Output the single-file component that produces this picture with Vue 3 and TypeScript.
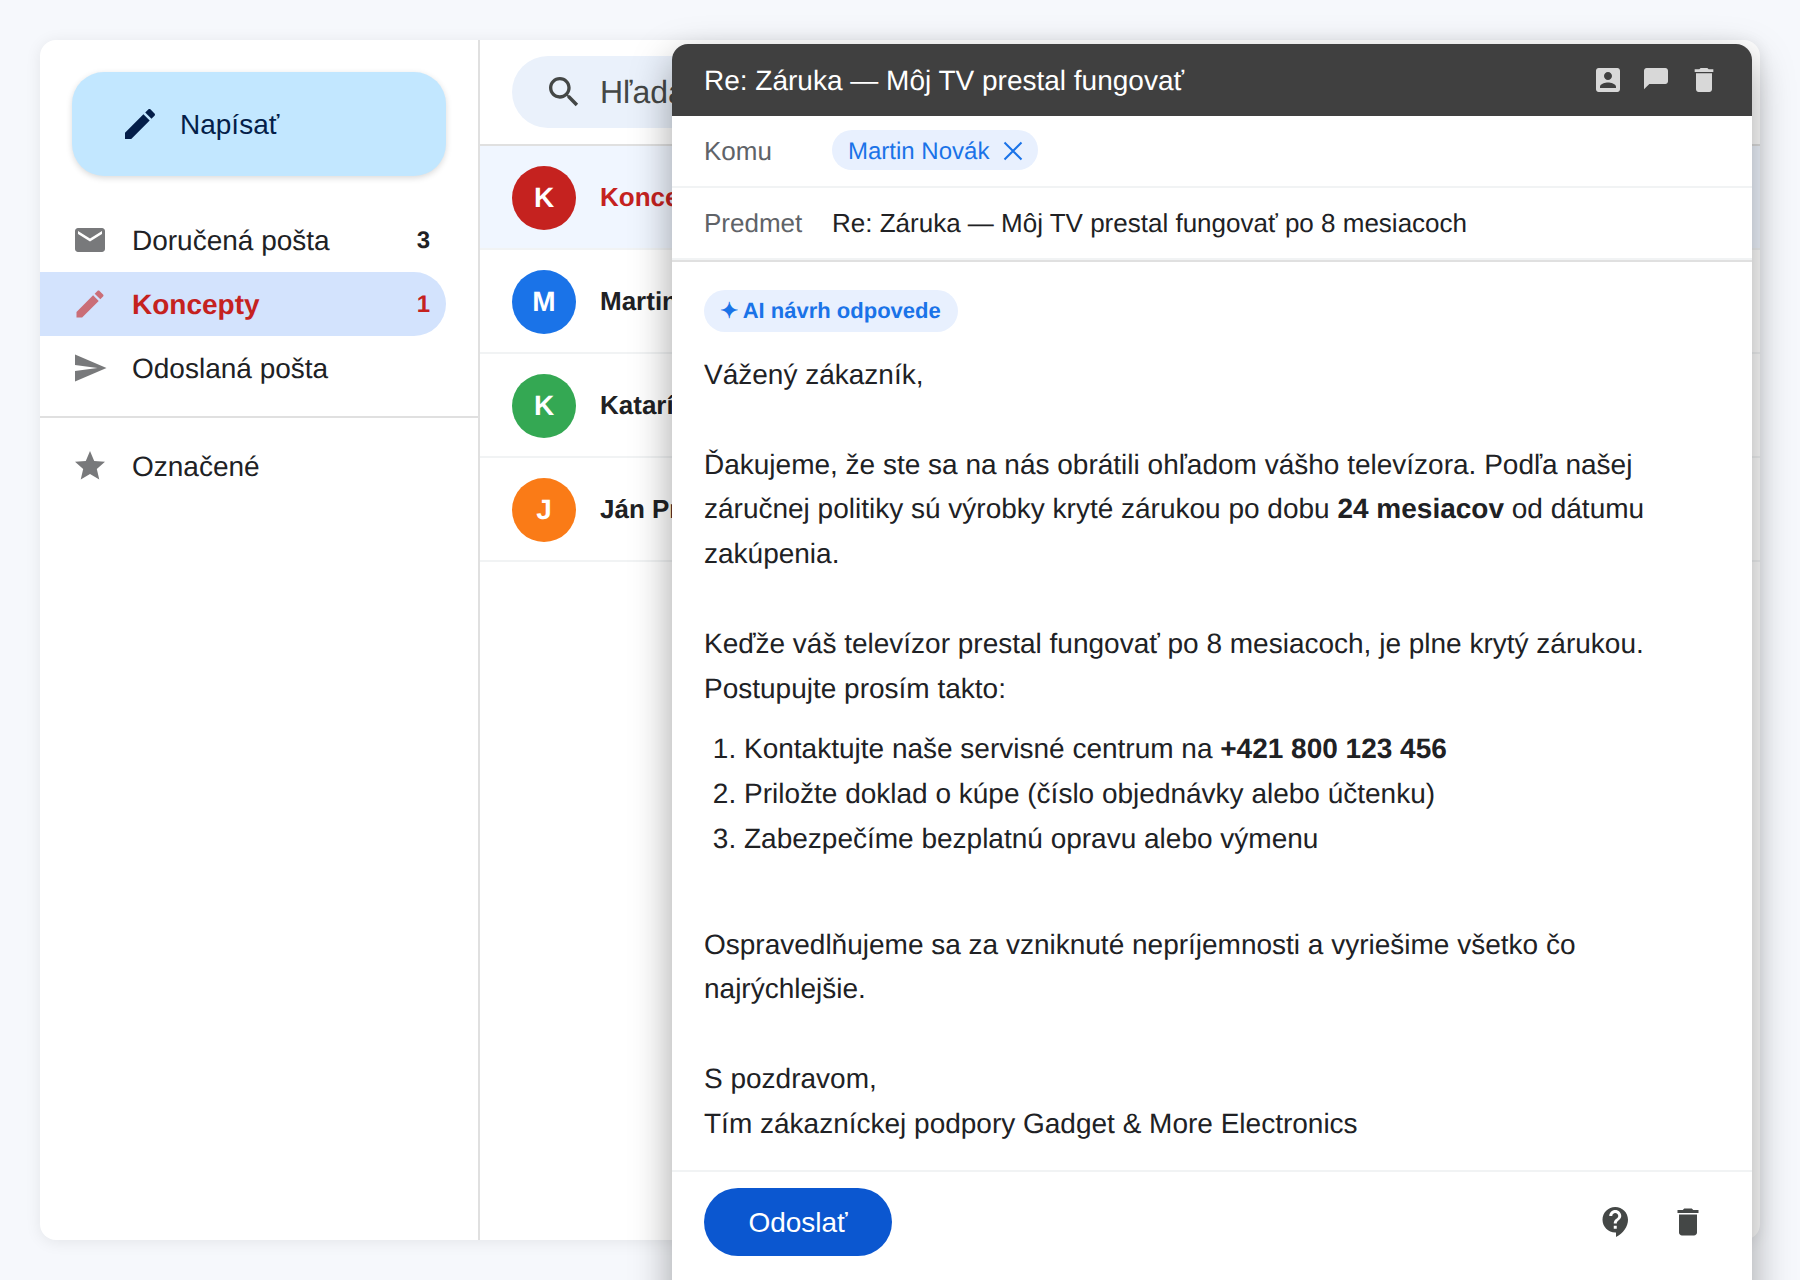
<script setup lang="ts">
interface NavItem {
  label: string;
  icon: string;
  count?: number;
  active?: boolean;
}

interface Row {
  letter: string;
  name: string;
  color: string;
  draft?: boolean;
}

const icons = {
  edit: "M3 17.25V21h3.75L17.81 9.94l-3.75-3.75L3 17.25zM20.71 7.04c.39-.39.39-1.02 0-1.41l-2.34-2.34c-.39-.39-1.02-.39-1.41 0l-1.83 1.83 3.75 3.75 1.83-1.83z",
  mail: "M20 4H4c-1.1 0-1.99.9-1.99 2L2 18c0 1.1.9 2 2 2h16c1.1 0 2-.9 2-2V6c0-1.1-.9-2-2-2zm0 4l-8 5-8-5V6l8 5 8-5v2z",
  send: "M2.01 21L23 12 2.01 3 2 10l15 2-15 2z",
  star: "M12 17.27L18.18 21l-1.64-7.03L22 9.24l-7.19-.61L12 2 9.19 8.63 2 9.24l5.46 4.73L5.82 21z",
  search: "M15.5 14h-.79l-.28-.27C15.41 12.59 16 11.11 16 9.5 16 5.91 13.09 3 9.5 3S3 5.91 3 9.5 5.91 16 9.5 16c1.61 0 3.09-.59 4.23-1.57l.27.28v.79l5 4.99L20.49 19l-4.99-5zm-6 0C7.01 14 5 11.99 5 9.5S7.01 5 9.5 5 14 7.01 14 9.5 11.99 14 9.5 14z",
  person: "M3 5v14c0 1.1.89 2 2 2h14c1.1 0 2-.9 2-2V5c0-1.1-.9-2-2-2H5c-1.11 0-2 .9-2 2zm12 4c0 1.66-1.34 3-3 3s-3-1.34-3-3 1.34-3 3-3 3 1.34 3 3zm-9 8c0-2 4-3.1 6-3.1s6 1.1 6 3.1v1H6v-1z",
  chat: "M19 3H5c-1.1 0-2 .9-2 2v14l4-4h12c1.1 0 2-.9 2-2V5c0-1.1-.9-2-2-2z",
  trash: "M6 19c0 1.1.9 2 2 2h8c1.1 0 2-.9 2-2V7H6v12zM19 4h-3.5l-1-1h-5l-1 1H5v2h14V4z",
  help: "M11.5 2C6.81 2 3 5.81 3 10.5S6.81 19 11.5 19h.5v3c4.86-2.34 8-7 8-11.5C20 5.81 16.19 2 11.5 2zm1 14.5h-2v-2h2v2zm0-3.5h-2c0-3.25 3-3 3-5 0-1.1-.9-2-2-2s-2 .9-2 2h-2c0-2.21 1.79-4 4-4s4 1.79 4 4c0 2.5-3 2.75-3 5z",
};

const mainNav: NavItem[] = [
  { label: "Doručená pošta", icon: icons.mail, count: 3 },
  { label: "Koncepty", icon: icons.edit, count: 1, active: true },
  { label: "Odoslaná pošta", icon: icons.send },
];

const rows: Row[] = [
  { letter: "K", name: "Koncept", color: "#c5221f", draft: true },
  { letter: "M", name: "Martin Novák", color: "#1a73e8" },
  { letter: "K", name: "Katarína Horváthová", color: "#34a853" },
  { letter: "J", name: "Ján Procházka", color: "#fa7b17" },
];
</script>

<template>
  <div class="page">
    <div class="app">
      <aside class="sidebar">
        <div class="compose-wrap">
          <button class="compose-btn">
            <svg class="icon-40" viewBox="0 0 24 24"><path :d="icons.edit" /></svg>
            <span>Napísať</span>
          </button>
        </div>

        <nav class="nav">
          <a v-for="item in mainNav" :key="item.label" class="nav-item" :class="{ active: item.active }">
            <svg class="nav-icon" viewBox="0 0 24 24"><path :d="item.icon" /></svg>
            <span class="nav-label">{{ item.label }}</span>
            <span v-if="item.count" class="nav-count">{{ item.count }}</span>
          </a>
        </nav>

        <div class="nav-divider"></div>

        <a class="nav-item">
          <svg class="nav-icon" viewBox="0 0 24 24"><path :d="icons.star" /></svg>
          <span class="nav-label">Označené</span>
        </a>
      </aside>

      <section class="list">
        <div class="toolbar">
          <div class="search">
            <svg class="icon-40" viewBox="0 0 24 24"><path :d="icons.search" /></svg>
            <span>Hľadať</span>
          </div>
        </div>
        <div v-for="row in rows" :key="row.name" class="row" :class="{ draft: row.draft }">
          <div class="avatar" :style="{ background: row.color }">{{ row.letter }}</div>
          <span class="row-name">{{ row.name }}</span>
        </div>
      </section>

      <div class="window">
        <header class="win-head">
          <span class="win-title">Re: Záruka — Môj TV prestal fungovať</span>
          <div class="win-actions">
            <svg viewBox="0 0 24 24"><path :d="icons.person" /></svg>
            <svg viewBox="0 0 24 24"><path :d="icons.chat" /></svg>
            <svg viewBox="0 0 24 24"><path :d="icons.trash" /></svg>
          </div>
        </header>

        <div class="field to">
          <span class="field-label">Komu</span>
          <span class="chip">
            <span class="chip-name">Martin Novák</span>
            <svg viewBox="0 0 24 24"><path d="M3.5 3.5l17 17M20.5 3.5l-17 17" /></svg>
          </span>
        </div>

        <div class="field subject">
          <span class="field-label">Predmet</span>
          <span>Re: Záruka — Môj TV prestal fungovať po 8 mesiacoch</span>
        </div>

        <div class="body">
          <div class="ai-tag"><span class="spark">✦</span> AI návrh odpovede</div>
          <p>Vážený zákazník,<br /><br />Ďakujeme, že ste sa na nás obrátili ohľadom vášho televízora. Podľa našej záručnej politiky sú výrobky kryté zárukou po dobu <strong>24 mesiacov</strong> od dátumu zakúpenia.<br /><br />Keďže váš televízor prestal fungovať po 8 mesiacoch, je plne krytý zárukou. Postupujte prosím takto:</p>
          <ol>
            <li>Kontaktujte naše servisné centrum na <strong>+421 800 123 456</strong></li>
            <li>Priložte doklad o kúpe (číslo objednávky alebo účtenku)</li>
            <li>Zabezpečíme bezplatnú opravu alebo výmenu</li>
          </ol>
          <p><br />Ospravedlňujeme sa za vzniknuté nepríjemnosti a vyriešime všetko čo najrýchlejšie.<br /><br />S pozdravom,<br />Tím zákazníckej podpory Gadget &amp; More Electronics</p>
        </div>

        <footer class="win-foot">
          <button class="send">Odoslať</button>
          <div class="foot-actions">
            <svg viewBox="0 0 24 24"><path :d="icons.help" /></svg>
            <svg viewBox="0 0 24 24"><path :d="icons.trash" /></svg>
          </div>
        </footer>
      </div>
    </div>
  </div>
</template>

<style scoped>
.page {
  height: 1280px;
  padding: 40px;
  box-sizing: border-box;
  background: #f6f8fc;
  overflow: hidden;
  font-family: "Liberation Sans", Arial, sans-serif;
  color: #202124;
  text-rendering: geometricPrecision;
}

.app {
  position: relative;
  display: flex;
  height: 1200px;
  background: #fff;
  border-radius: 16px;
  box-shadow: 0 2px 16px rgba(0, 0, 0, 0.08);
}

svg {
  display: block;
  fill: currentColor;
  flex-shrink: 0;
}

.icon-40 {
  width: 40px;
  height: 40px;
}

/* sidebar */
.sidebar {
  width: 440px;
  flex-shrink: 0;
  box-sizing: border-box;
  border-right: 2px solid #e0e0e0;
  padding-top: 32px;
  padding-right: 32px;
}

.compose-wrap {
  padding-left: 32px;
  margin-bottom: 32px;
}

.compose-btn {
  display: flex;
  align-items: center;
  gap: 20px;
  width: 100%;
  height: 104px;
  padding: 0 48px;
  border: none;
  border-radius: 32px;
  background: #c2e7ff;
  color: #041e49;
  font: inherit;
  font-size: 28px;
  box-shadow: 0 2px 6px rgba(0, 0, 0, 0.15);
}

.compose-btn span {
  padding-top: 2px;
}

.nav-item {
  display: flex;
  align-items: center;
  gap: 24px;
  height: 64px;
  padding: 0 16px 0 32px;
  border-radius: 0 32px 32px 0;
  font-size: 28px;
}

.nav-icon {
  width: 36px;
  height: 36px;
  opacity: 0.6;
}

.nav-label {
  flex: 1;
  padding-top: 2px;
}

.nav-count {
  padding-top: 2px;
  font-size: 24px;
  font-weight: 700;
}

.nav-item.active {
  background: #d3e3fd;
  color: #c5221f;
  font-weight: 700;
}

.nav-divider {
  height: 2px;
  margin: 16px -32px 16px 0;
  background: #e0e0e0;
}

/* message list */
.list {
  flex: 1;
  min-width: 0;
}

.toolbar {
  padding: 16px 32px;
  border-bottom: 2px solid #e0e0e0;
  height: 106px;
  box-sizing: border-box;
}

.search {
  display: flex;
  align-items: center;
  gap: 16px;
  height: 72px;
  padding: 0 32px;
  border-radius: 36px;
  background: #eaf1fb;
  color: #444746;
  font-size: 32px;
}

.row {
  display: flex;
  align-items: center;
  gap: 24px;
  height: 104px;
  padding: 2px 32px 0;
  box-sizing: border-box;
  border-bottom: 2px solid #f1f3f4;
  font-size: 26px;
  font-weight: 700;
}

.row-name {
  margin-top: -2px;
}

.row.draft {
  background: #f0f6ff;
  color: #c5221f;
}

.avatar {
  display: flex;
  align-items: center;
  justify-content: center;
  width: 64px;
  height: 64px;
  border-radius: 50%;
  color: #fff;
  font-size: 28px;
}

/* reply window */
.window {
  position: absolute;
  top: 4px;
  right: 8px;
  width: 1080px;
  height: 1300px;
  background: #fff;
  border-radius: 16px 16px 0 0;
  box-shadow: 0 16px 40px rgba(0, 0, 0, 0.36);
}

.win-head {
  display: flex;
  align-items: center;
  justify-content: space-between;
  height: 72px;
  padding: 0 32px;
  background: #404040;
  border-radius: 16px 16px 0 0;
  color: #fff;
  font-size: 28px;
}

.win-title {
  padding-top: 2px;
}

.win-actions {
  display: flex;
  gap: 16px;
  color: #fff;
  opacity: 0.8;
}

.win-actions svg {
  width: 32px;
  height: 32px;
}

.field {
  display: flex;
  align-items: center;
  gap: 28px;
  box-sizing: border-box;
  font-size: 26px;
  border-bottom: 2px solid #f1f3f4;
}

.field.to {
  height: 72px;
  padding: 0 32px 2px;
}

.field.to .field-label {
  padding-top: 2px;
}

.field.subject {
  height: 72px;
  padding: 0 32px;
}

.field-label {
  width: 100px;
  color: #5f6368;
}

.chip {
  display: flex;
  align-items: center;
  gap: 12px;
  height: 40px;
  padding: 0 13px 0 16px;
  border-radius: 20px;
  background: #e8f0fe;
  color: #1a73e8;
  font-size: 24px;
}

.chip-name {
  padding-top: 4px;
}

.chip svg {
  width: 24px;
  height: 24px;
  margin-top: 2px;
  stroke: currentColor;
  stroke-width: 2;
  fill: none;
}

.body {
  padding: 28px 32px 23px;
  border-top: 2px solid #e0e0e0;
  font-size: 28px;
  line-height: 1.6;
}

.body p {
  margin: 0;
}

.body ol {
  margin: 16px 0;
  padding-left: 40px;
}

.ai-tag {
  width: fit-content;
  height: 42px;
  padding: 0 17px 0 16px;
  margin-bottom: 21px;
  border-radius: 21px;
  background: #e8f0fe;
  color: #1a73e8;
  font-size: 22px;
  font-weight: 700;
  line-height: 42px;
}

.spark {
  margin-right: -1px;
}

.win-foot {
  display: flex;
  align-items: center;
  justify-content: space-between;
  padding: 16px 46px 16px 32px;
  border-top: 2px solid #f1f3f4;
}

.send {
  width: 188px;
  height: 68px;
  padding: 2px 0 0;
  border: none;
  border-radius: 34px;
  background: #0b57d0;
  color: #fff;
  font: inherit;
  font-size: 28px;
}

.foot-actions {
  display: flex;
  gap: 36px;
  color: #444746;
}

.foot-actions svg {
  width: 36px;
  height: 36px;
}
</style>
